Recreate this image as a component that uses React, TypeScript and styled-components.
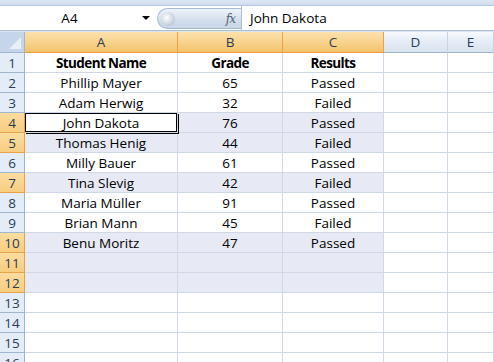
import React from "react";
import styled, { createGlobalStyle, css } from "styled-components";

const Global = createGlobalStyle`
  html, body { margin: 0; padding: 0; background: #ffffff; overflow: hidden; }
  body { font-family: "Open Sans", "Noto Sans", sans-serif; }
`;

const Window = styled.div`
  width: 494px;
  height: 362px;
  overflow: hidden;
  background: #ffffff;
`;

const RibbonEdge = styled.div`
  height: 5px;
  background: linear-gradient(#dbe6f4, #cfdcee);
  border-bottom: 1px solid #b6c8e0;
`;

const FormulaBar = styled.div`
  height: 24px;
  display: flex;
  align-items: stretch;
  background: #ffffff;
  border-bottom: 1px solid #a9bfd6;
`;

const NameBox = styled.div`
  width: 155px;
  position: relative;
  display: flex;
  align-items: center;
  justify-content: center;
  font-size: 13.5px;
  color: #000;
  padding-right: 16px;
  box-sizing: border-box;
`;

const DropArrow = styled.span`
  position: absolute;
  right: 5px;
  top: 10px;
  width: 0;
  height: 0;
  border-left: 4px solid transparent;
  border-right: 4px solid transparent;
  border-top: 4px solid #000;
`;

const Pill = styled.div`
  width: 84px;
  margin: 2px 0 1px 2px;
  border-radius: 11px 0 0 11px;
  background: linear-gradient(#eef3fa, #d3deec 60%, #c8d5e7);
  border: 1px solid #a7bad3;
  border-right: none;
  display: flex;
  align-items: center;
  justify-content: space-between;
  padding: 0 6px 0 3px;
  box-sizing: border-box;
`;

const Knob = styled.span`
  width: 14px;
  height: 14px;
  border-radius: 50%;
  background: radial-gradient(circle at 40% 40%, #ffffff, #c9d3df 60%, #a9b6c6);
`;

const Fx = styled.span`
  font-family: "DejaVu Serif", "Liberation Serif", serif;
  font-style: italic;
  font-size: 12px;
  color: #556070;
  letter-spacing: -1px;
`;

const FormulaInput = styled.div`
  flex: 1;
  border-left: 1px solid #a9bfd6;
  display: flex;
  align-items: center;
  padding-left: 8px;
  font-size: 13.5px;
  color: #000;
`;

const Gap = styled.div`
  height: 1px;
  background: #dbe4f0;
`;

const Grid = styled.div`
  display: grid;
  grid-template-columns: 25px 153px 105px 101px 64px 1fr;
  grid-template-rows: 21px;
  grid-auto-rows: 20px;
  font-size: 13.5px;
`;

const Corner = styled.div`
  position: relative;
  background: #c5d5ea;
  border-right: 1px solid #9eb6ce;
  border-bottom: 1px solid #9eb6ce;
  &::after {
    content: "";
    position: absolute;
    right: 3px;
    bottom: 3px;
    width: 0;
    height: 0;
    border-left: 12px solid transparent;
    border-bottom: 12px solid #e9eff8;
  }
`;

const ColHeader = styled.div<{ $sel?: boolean }>`
  display: flex;
  align-items: center;
  justify-content: center;
  color: #2a3c55;
  border-bottom: 1px solid #9eb6ce;
  border-right: 1px solid #c5d3e3;
  background: linear-gradient(#f7f9fd, #e4ebf5 50%, #dae3ef);
  ${(p) =>
    p.$sel &&
    css`
      background: linear-gradient(#fbe1ad, #f8d38e 50%, #f3c26a);
      border-right: 1px solid #e9a24a;
      border-bottom: 1px solid #f29d3a;
    `}
`;

const RowHeader = styled.div<{ $sel?: boolean }>`
  display: flex;
  align-items: center;
  justify-content: center;
  color: #2a3c55;
  background: #e4ecf7;
  border-right: 1px solid #9eb6ce;
  border-bottom: 1px solid #9eb6ce;
  ${(p) =>
    p.$sel &&
    css`
      background: linear-gradient(#fbdca0, #f7cd80);
      border-right: 1px solid #f29d3a;
      border-bottom: 1px solid #e9a24a;
    `}
`;

const Cell = styled.div<{ $sel?: boolean; $active?: boolean; $bold?: boolean }>`
  display: flex;
  align-items: center;
  justify-content: center;
  color: #000;
  white-space: nowrap;
  overflow: hidden;
  border-right: 1px solid #d0d7e5;
  border-bottom: 1px solid #d0d7e5;
  background: ${(p) => (p.$sel ? "#e7eaf4" : "#ffffff")};
  font-weight: ${(p) => (p.$bold ? 700 : 400)};
  letter-spacing: ${(p) => (p.$bold ? "-0.6px" : "0")};
  ${(p) =>
    p.$active &&
    css`
      background: #ffffff;
      box-shadow: inset 0 0 0 1px #000, 1px 1px 0 0 #000;
      position: relative;
    `}
`;

const data: [string, string, string][] = [
  ["Student Name", "Grade", "Results"],
  ["Phillip Mayer", "65", "Passed"],
  ["Adam Herwig", "32", "Failed"],
  ["John Dakota", "76", "Passed"],
  ["Thomas Henig", "44", "Failed"],
  ["Milly Bauer", "61", "Passed"],
  ["Tina Slevig", "42", "Failed"],
  ["Maria Müller", "91", "Passed"],
  ["Brian Mann", "45", "Failed"],
  ["Benu Moritz", "47", "Passed"],
];

const selectedRows = new Set([4, 5, 7, 10, 11, 12]);
const cols = ["A", "B", "C", "D", "E"];

export default function App() {
  const rows = [];
  for (let r = 1; r <= 16; r++) {
    const sel = selectedRows.has(r);
    const vals = data[r - 1] ?? ["", "", ""];
    rows.push(
      <React.Fragment key={r}>
        <RowHeader $sel={sel}>{r}</RowHeader>
        {[0, 1, 2].map((c) => (
          <Cell
            key={c}
            $sel={sel}
            $active={r === 4 && c === 0}
            $bold={r === 1}
          >
            {vals[c]}
          </Cell>
        ))}
        <Cell />
        <Cell />
      </React.Fragment>
    );
  }
  return (
    <Window>
      <Global />
      <RibbonEdge />
      <FormulaBar>
        <NameBox>
          A4
          <DropArrow />
        </NameBox>
        <Pill>
          <Knob />
          <Fx>fx</Fx>
        </Pill>
        <FormulaInput>John Dakota</FormulaInput>
      </FormulaBar>
      <Gap />
      <Grid>
        <Corner />
        {cols.map((c, i) => (
          <ColHeader key={c} $sel={i < 3}>
            {c}
          </ColHeader>
        ))}
        {rows}
      </Grid>
    </Window>
  );
}
